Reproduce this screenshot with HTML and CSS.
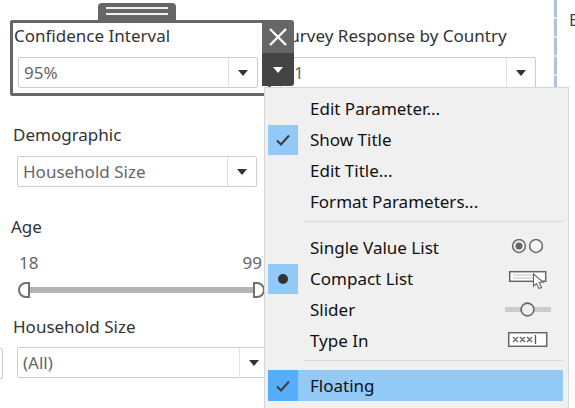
FILE: index.html
```html
<!DOCTYPE html>
<html>
<head>
  <title>Parameter Menu</title>
  <link rel="stylesheet" href="styles.css">
</head>
<body>
  <div class="dashboard">
    <!-- Left column of filters -->
    <div class="col-left">
      <div class="param param-first">
        <div class="param-title">Confidence Interval</div>
        <div class="select"><span class="select-value">95%</span><span class="select-btn"><i class="caret"></i></span></div>
      </div>
      <div class="param param-demo">
        <div class="param-title">Demographic</div>
        <div class="select"><span class="select-value">Household Size</span><span class="select-btn"><i class="caret"></i></span></div>
      </div>
      <div class="param param-age">
        <div class="param-title">Age</div>
        <div class="range-labels"><span>18</span><span>99</span></div>
        <div class="range">
          <i class="range-handle range-handle-l"></i>
          <i class="range-bar"></i>
          <i class="range-handle range-handle-r"></i>
        </div>
      </div>
      <div class="param param-house">
        <div class="param-title">Household Size</div>
        <div class="select select-wide"><span class="select-value">(All)</span><span class="select-btn"><i class="caret"></i></span></div>
      </div>
      <div class="stub"></div>
    </div>

    <!-- Middle column -->
    <div class="col-mid">
      <div class="param-title">Survey Response by Country</div>
      <div class="select select-mid"><span class="select-value">1</span><span class="select-btn"><i class="caret"></i></span></div>
    </div>

    <div class="divider"></div>

    <!-- Right edge -->
    <div class="col-right">E</div>
  </div>

  <!-- Selected frame around the first parameter -->
  <div class="frame">
    <div class="frame-grip"><i></i><i></i></div>
    <div class="frame-box"></div>
    <div class="frame-side">
      <div class="frame-close">
        <svg width="20" height="20" viewBox="0 0 20 20"><path d="M2 2 L18 18 M18 2 L2 18" stroke="#fff" stroke-width="2.4" fill="none"/></svg>
      </div>
      <div class="frame-more"><i class="caret caret-white"></i></div>
    </div>
  </div>

  <!-- Context menu -->
  <div class="menu">
    <div class="menu-item"><span class="mark"></span><span class="label">Edit Parameter...</span></div>
    <div class="menu-item"><span class="mark mark-on">
      <svg width="16" height="14" viewBox="0 0 16 14"><path d="M2 7.5 L6 11.5 L14 2.5" stroke="#3c3c3c" stroke-width="2" fill="none"/></svg>
    </span><span class="label">Show Title</span></div>
    <div class="menu-item"><span class="mark"></span><span class="label">Edit Title...</span></div>
    <div class="menu-item"><span class="mark"></span><span class="label">Format Parameters...</span></div>
    <div class="menu-sep"></div>
    <div class="menu-item"><span class="mark"></span><span class="label">Single Value List</span>
      <svg class="menu-icon" width="46" height="18" viewBox="0 0 46 18">
        <circle cx="14" cy="7" r="6.4" fill="none" stroke="#666" stroke-width="1.5"/>
        <circle cx="14" cy="7" r="3.5" fill="#666"/>
        <circle cx="31" cy="7" r="6.4" fill="#f6f6f6" stroke="#666" stroke-width="1.5"/>
      </svg>
    </div>
    <div class="menu-item"><span class="mark mark-on"><i class="dot"></i></span><span class="label">Compact List</span>
      <svg class="menu-icon" width="46" height="20" viewBox="0 0 46 20">
        <rect x="4.7" y="2.7" width="36" height="9.6" fill="#fff" stroke="#666" stroke-width="1.5"/>
        <path d="M8 6 H28 M8 9 H28" stroke="#bbb" stroke-width="1"/>
        <path d="M28.5 5 L28.5 17 L31.5 14.5 L34 19.5 L36.5 18.5 L34.2 13.5 L38 13 Z" fill="#fff" stroke="#666" stroke-width="1.1"/>
      </svg>
    </div>
    <div class="menu-item"><span class="mark"></span><span class="label">Slider</span>
      <svg class="menu-icon" width="46" height="18" viewBox="0 0 46 18">
        <rect x="0" y="6" width="46" height="5" fill="#ccc"/>
        <circle cx="22.5" cy="8.5" r="6.4" fill="#f0f0f0" stroke="#666" stroke-width="1.6"/>
      </svg>
    </div>
    <div class="menu-item"><span class="mark"></span><span class="label">Type In</span>
      <svg class="menu-icon" width="46" height="18" viewBox="0 0 46 18">
        <rect x="3.7" y="0.7" width="38" height="13.6" fill="#fff" stroke="#666" stroke-width="1.5"/>
        <path d="M8 5 L13 10 M13 5 L8 10 M15 5 L20 10 M20 5 L15 10 M22 5 L27 10 M27 5 L22 10" stroke="#666" stroke-width="1.3"/>
        <path d="M30.5 3 V12" stroke="#555" stroke-width="1.3"/>
      </svg>
    </div>
    <div class="menu-sep menu-sep-last"></div>
    <div class="menu-item menu-item-active"><span class="mark mark-strong">
      <svg width="16" height="14" viewBox="0 0 16 14"><path d="M2 7.5 L6 11.5 L14 2.5" stroke="#3c3c3c" stroke-width="2" fill="none"/></svg>
    </span><span class="label">Floating</span></div>
  </div>
</body>
</html>
```

FILE: styles.css
```css
/* Page */
body {
  margin: 0;
  width: 575px;
  height: 408px;
  overflow: hidden;
  background-color: white;
  font-family: "Noto Sans", "Open Sans", sans-serif;
  color: #333;
  position: relative;
}

.dashboard {
  display: flex;
  height: 408px;
}

/* Columns */
.col-left {
  width: 278px;
  flex: none;
  position: relative;
}

.col-mid {
  width: 276px;
  flex: none;
  padding: 26px 0 0 2px;
  box-sizing: border-box;
}

.divider {
  width: 3px;
  flex: none;
  background: repeating-linear-gradient(#b0c2dc 0 17px, #e8e8e8 17px 19px);
}

.col-right {
  padding: 8px 0 0 12px;
  font-size: 17px;
  color: #444;
}

/* Parameters */
.param-title {
  font-size: 17px;
  line-height: 20px;
  color: #333;
}

.param-first {
  padding: 26px 0 0 14px;
}

.param-demo {
  padding: 37px 0 0 13px;
}

.param-age {
  padding: 30px 0 0 11px;
}

.param-house {
  padding: 19px 0 0 13px;
}

.select {
  display: flex;
  width: 240px;
  height: 31px;
  box-sizing: border-box;
  margin: 11px 0 0 4px;
  border: 1px solid #ccc;
  border-radius: 2px;
  background-color: white;
}

.select-wide {
  width: 270px;
  margin-top: 10px;
}

.select-wide .select-btn {
  margin-right: 18px;
}

.select-mid {
  width: 256px;
  margin-left: 0;
}

.select-mid .select-value {
  padding-left: 13px;
}

.select-value {
  flex: 1;
  padding-left: 5px;
  font-size: 17px;
  line-height: 29px;
  color: #666;
}

.select-btn {
  width: 28px;
  display: flex;
  align-items: center;
  justify-content: center;
  border-left: 1px solid #e2e2e2;
}

.caret {
  width: 0;
  height: 0;
  border-left: 5.5px solid transparent;
  border-right: 5.5px solid transparent;
  border-top: 6px solid #333;
}

.caret-white {
  border-top-color: white;
}

/* Age slider */
.range-labels {
  display: flex;
  justify-content: space-between;
  width: 251px;
  padding-left: 8px;
  box-sizing: border-box;
  margin-top: 16px;
  font-size: 17px;
  line-height: 20px;
  color: #666;
}

.range {
  display: flex;
  align-items: center;
  width: 247px;
  margin: 9px 0 0 7px;
}

.range-bar {
  flex: 1;
  height: 6px;
  background-color: #b4b4b4;
}

.range-handle {
  width: 12px;
  height: 16px;
  box-sizing: border-box;
  border: 2px solid #707070;
  background-color: white;
}

.range-handle-l {
  border-radius: 8px 0 0 8px;
}

.range-handle-r {
  border-radius: 0 8px 8px 0;
}

.stub {
  position: absolute;
  left: -8px;
  top: 348px;
  width: 11px;
  height: 31px;
  box-sizing: border-box;
  border: 1px solid #ccc;
  border-radius: 2px;
}

/* Selected frame */
.frame {
  position: absolute;
  left: 10px;
  top: 3px;
  width: 284px;
  height: 93px;
}

.frame-grip {
  position: absolute;
  left: 88px;
  top: 0;
  width: 78px;
  height: 18px;
  padding-top: 4px;
  box-sizing: border-box;
  background-color: #666;
  border-radius: 4px 4px 0 0;
}

.frame-grip i {
  display: block;
  width: 62px;
  height: 2px;
  margin: 0 auto 4px;
  background-color: #eee;
}

.frame-box {
  position: absolute;
  left: 0;
  top: 17px;
  width: 255px;
  height: 70px;
  border: 3px solid #666;
  border-radius: 2px 0 0 2px;
}

.frame-side {
  position: absolute;
  left: 252px;
  top: 17px;
  width: 32px;
  height: 66px;
  border-radius: 0 3px 3px 0;
  overflow: hidden;
}

.frame-close {
  height: 33px;
  display: flex;
  align-items: center;
  justify-content: center;
  background-color: #666;
}

.frame-more {
  height: 33px;
  display: flex;
  align-items: center;
  justify-content: center;
  background-color: #444;
}

/* Context menu */
.menu {
  position: absolute;
  left: 264px;
  top: 87px;
  width: 305px;
  height: 330px;
  box-sizing: border-box;
  padding: 5px 5px 0 3px;
  background-color: #f0f0f0;
  border: 1px solid #d6d6d6;
}

.menu-item {
  display: flex;
  align-items: center;
  height: 31px;
  font-size: 17px;
  color: #111;
}

.mark {
  width: 30px;
  height: 30px;
  flex: none;
  display: flex;
  align-items: center;
  justify-content: center;
}

.mark-on {
  background-color: #93c9f7;
}

.mark-strong {
  height: 31px;
  background-color: #56aefb;
}

.dot {
  width: 10px;
  height: 10px;
  border-radius: 50%;
  background-color: #333;
}

.label {
  flex: 1;
  padding-left: 12px;
}

.menu-icon {
  flex: none;
  margin-right: 12px;
}

.menu-sep {
  height: 1px;
  margin: 4px 0 10px 36px;
  background-color: #d9d9d9;
}

.menu-sep-last {
  margin-bottom: 9px;
}

.menu-item-active {
  background-color: #93c9f7;
}
```
